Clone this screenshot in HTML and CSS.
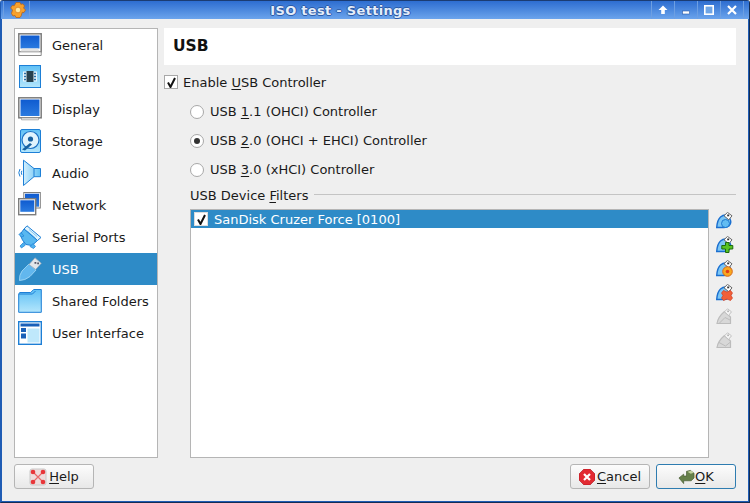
FILE: index.html
```html
<!DOCTYPE html>
<html lang="en">
<head>
<meta charset="utf-8">
<title>ISO test - Settings</title>
<link rel="stylesheet" href="styles.css">
</head>
<body>
<svg class="defs" width="0" height="0">
  <defs>
    <linearGradient id="sky" x1="0" y1="0" x2="0" y2="1"><stop offset="0" stop-color="#5fc0f5"/><stop offset="1" stop-color="#b4e6fc"/></linearGradient>
    <linearGradient id="skyr" x1="0" y1="0" x2="1" y2="0"><stop offset="0" stop-color="#d2effd"/><stop offset="1" stop-color="#62c0f3"/></linearGradient>
    <linearGradient id="scr" x1="0" y1="0" x2="0" y2="1"><stop offset="0" stop-color="#0f5bd0"/><stop offset="1" stop-color="#2a7ae0"/></linearGradient>
    <g id="mini">
      <path d="M.7 15.500 Q1.200 8 4.500 5 Q7 2.800 10 3 L14 7 Q16 11 13 14 Q11 15.500 8 15.500Z" fill="#7cc6f4" stroke="#1a6fd0" stroke-width="1.400"/>
      <path d="M8 3.800 L11.500 .4 L16 3.800 L12.800 7.800 Z" fill="#fff" stroke="#666" stroke-width="1"/>
      <rect x="11.200" y="2.500" width="2" height="1.800" fill="#333"/>
    </g>
    <g id="mini-off">
      <path d="M1 15.500 Q2 9 8.500 3.500 L14.500 9 L14.500 15.500 Z" fill="#d8d8d8" stroke="#bcbcbc" stroke-width="1.200"/>
      <path d="M8.500 3.800 L11.500 .8 L15.500 3.800 L12.500 7.500 Z" fill="#f5f5f5" stroke="#bcbcbc" stroke-width=".9"/>
      <rect x="11.200" y="2.500" width="1.800" height="1.600" fill="#b4b4b4"/>
    </g>
  </defs>
</svg>
<div class="window">
  <header class="titlebar">
    <div class="title-left">
      <svg class="app-icon" width="16" height="16" viewBox="0 0 16 16"><path d="M6 .5h4l.8 1.800 2-.4 1.700 2L13.600 6 15.500 8l-1.500 2.500-1.800-.2-1 3.500-1.200 1.700H6l-1-2-2 .5L1.500 11.500 2.500 8 .7 6l1.500-2.500 2 .3z" fill="#f7a12c" stroke="#b8651a" stroke-width=".8"/><circle cx="8" cy="8" r="2.800" fill="#ffe9a0" stroke="#d87a1c" stroke-width=".7"/></svg>
    </div>
    <div class="title">ISO test - Settings</div>
    <div class="title-buttons">
      <span class="tbtn"><svg width="10" height="10" viewBox="0 0 10 10"><path d="M5 .5 9.500 5H6.800v4H3.200V5H.5z" fill="#fff"/></svg></span>
      <span class="tbtn"><svg width="10" height="10" viewBox="0 0 10 10"><rect x="1.500" y="6" width="7" height="3" fill="#fff" stroke="#2a5aa8" stroke-width=".6"/></svg></span>
      <span class="tbtn"><svg width="10" height="10" viewBox="0 0 10 10"><rect x=".8" y=".8" width="8.400" height="8.400" fill="#6fa5e6" stroke="#fff" stroke-width="1.600"/></svg></span>
      <span class="tbtn"><svg width="10" height="10" viewBox="0 0 10 10"><path d="M1 1l8 8M9 1l-8 8" stroke="#fff" stroke-width="2.200"/></svg></span>
    </div>
  </header>
  <div class="client">
    <div class="main">
      <nav class="sidebar">
        <div class="nav-item">
          <svg class="nav-icon" viewBox="0 0 24 24"><rect x=".8" y=".8" width="22.400" height="18" fill="#fff" stroke="#7d7d7d" stroke-width="1.500"/><rect x="2.500" y="2.500" width="19" height="13" fill="url(#scr)"/><path d="M.8 18.800h22.400v3.700H.8z" fill="#fff" stroke="#8a8a8a"/><path d="M4 15.500h16l1.500 3H2.500z" fill="#e4e4e4"/></svg>
          <span>General</span>
        </div>
        <div class="nav-item">
          <svg class="nav-icon" viewBox="0 0 24 24"><rect x="1.500" y=".5" width="21" height="22" fill="url(#sky)" stroke="#1d7fd6"/><rect x="5" y="6.500" width="14" height="10" fill="#e8f6fd"/><rect x="8.500" y="6" width="7" height="11" fill="#26404f"/><path d="M6 8.500h2M6 11.500h2M6 14.500h2M16 8.500h2M16 11.500h2M16 14.500h2" stroke="#2a6ea8" stroke-width="1.300"/></svg>
          <span>System</span>
        </div>
        <div class="nav-item">
          <svg class="nav-icon" viewBox="0 0 24 24"><rect x=".8" y=".8" width="22.400" height="20" fill="#fff" stroke="#7d7d7d" stroke-width="1.500"/><rect x="2.500" y="2.500" width="19" height="16.500" fill="url(#scr)"/><path d="M3.500 21h17v1.800h-17z" fill="#fff" stroke="#999" stroke-width=".8"/></svg>
          <span>Display</span>
        </div>
        <div class="nav-item">
          <svg class="nav-icon" viewBox="0 0 24 24"><rect x="2.500" y=".5" width="20" height="23" rx="1.500" fill="url(#sky)" stroke="#1d7fd6"/><circle cx="12.500" cy="11" r="8.500" fill="#dff3fd" stroke="#1a70c4" stroke-width="1.200"/><circle cx="12.500" cy="10" r="2.600" fill="#17609f"/><path d="M4 20.500 12 14l2 1.500L7 21.500z" fill="#17609f"/></svg>
          <span>Storage</span>
        </div>
        <div class="nav-item">
          <svg class="nav-icon" viewBox="0 0 24 24"><path d="M5.500 -.8 16 7.500h6.500v8.200H16L5.500 24.500z" fill="url(#skyr)" stroke="#1d7fd6"/><path d="M16 7.500v8.200" stroke="#1d7fd6"/><path d="M2 8q-2.400 3.800 0 7.500M3.800 9.800q-1 2 0 4" fill="none" stroke="#1d7fd6"/></svg>
          <span>Audio</span>
        </div>
        <div class="nav-item">
          <svg class="nav-icon" viewBox="0 0 24 24"><rect x="5.800" y="-.5" width="16.500" height="15.500" fill="#fff" stroke="#7d7d7d"/><rect x="7" y=".7" width="14" height="13" fill="url(#scr)"/><rect x=".7" y="5.700" width="17" height="16" fill="#fff" stroke="#7d7d7d" stroke-width="1.400"/><rect x="2.300" y="7.300" width="14" height="11.500" fill="url(#scr)"/></svg>
          <span>Network</span>
        </div>
        <div class="nav-item">
          <svg class="nav-icon" viewBox="0 0 24 24"><path d="M9 .8 23 12.500 19.500 15.500 6 4z" fill="#dff3fd" stroke="#1d7fd6"/><path d="M11 4.500l8 7M9.500 6l8 7" stroke="#6cbcef" stroke-width=".8"/><path d="M6 4 19.500 15.500 14 20.500 8 19.500 4.500 15 2 9.500z" fill="#58b8f0" stroke="#1d7fd6"/><path d="M1 9.500 3 7.500 6 11 3.500 12zM12 21.500l3-3 2.500 3-2 2z" fill="#4db1ee" stroke="#1d7fd6" stroke-width=".7"/><path d="M5.500 17.500 2 21l1.500 2 4-3z" fill="#4db1ee" stroke="#1d7fd6" stroke-width=".7"/></svg>
          <span>Serial Ports</span>
        </div>
        <div class="nav-item active">
          <svg class="nav-icon" viewBox="0 0 24 24"><path d="M1.500 23.500Q1 18 4 14L11 7l7 6-6 6.500Q7 23.500 1.500 23.500z" fill="#62b7ee" stroke="#a8dcf8" stroke-width=".8"/><path d="M11 7.500 17 .8l6.300 5.500-5.600 6.200z" fill="#e2e6ea" stroke="#8fa4b4" stroke-width=".7"/><path d="M16.500 5h1.800v1.800h-1.800zM19.200 5.500h1.800v1.800h-1.800z" fill="#556"/></svg>
          <span>USB</span>
        </div>
        <div class="nav-item">
          <svg class="nav-icon" viewBox="0 0 24 24"><path d="M.7 5l1-1.500h11l3-3h7.600v22.800H.7z" fill="url(#sky)" stroke="#1d7fd6"/><path d="M1 5H14.500l3-3" fill="none" stroke="#1d7fd6"/></svg>
          <span>Shared Folders</span>
        </div>
        <div class="nav-item">
          <svg class="nav-icon" viewBox="0 0 24 24"><rect x=".7" y=".7" width="22.600" height="22.600" fill="#fff" stroke="#1d7fd6" stroke-width="1.400"/><rect x="2.500" y="2.500" width="19" height="3" fill="#1960b8"/><rect x="3" y="7" width="5" height="4" fill="#1960b8"/><rect x="3" y="12.500" width="5" height="5" fill="#1960b8"/><rect x="9.500" y="7.500" width="12" height="14" fill="#bfe8fb"/></svg>
          <span>User Interface</span>
        </div>
      </nav>
      <section class="panel">
        <h1 class="panel-title">USB</h1>
        <div class="enable-row">
          <span class="check"><svg width="11" height="11" viewBox="0 0 11 11"><path d="M2 5.500 4.500 10 9 1" fill="none" stroke="#111" stroke-width="2"/></svg></span>
          <span>Enable <u>U</u>SB Controller</span>
        </div>
        <div class="radios">
          <div class="radio-row"><span class="radio"></span><span>USB <u>1</u>.1 (OHCI) Controller</span></div>
          <div class="radio-row"><span class="radio on"></span><span>USB <u>2</u>.0 (OHCI + EHCI) Controller</span></div>
          <div class="radio-row"><span class="radio"></span><span>USB <u>3</u>.0 (xHCI) Controller</span></div>
        </div>
        <div class="filters">
          <div class="group-head"><span>USB Device <u>F</u>ilters</span><i class="rule"></i></div>
          <div class="filter-body">
            <div class="list">
              <div class="list-row">
                <span class="check list-check"><svg width="11" height="11" viewBox="0 0 11 11"><path d="M2 5.500 4.500 10 9 1" fill="none" stroke="#111" stroke-width="2"/></svg></span>
                <span>SanDisk Cruzer Force [0100]</span>
              </div>
            </div>
            <div class="tools">
              <svg class="tool" viewBox="0 0 18 18"><use href="#mini"/><circle cx="9.500" cy="11.500" r="4" fill="#62bcf2" stroke="#1e78d0"/></svg>
              <svg class="tool" viewBox="0 0 18 18"><use href="#mini"/><path d="M9.500 6.500h3.500v3h3.800v3.500H13v3.500H9.500V13H5.800V9.500h3.700z" fill="#58c322" stroke="#1d6a0c"/></svg>
              <svg class="tool" viewBox="0 0 18 18"><use href="#mini"/><circle cx="11.500" cy="11.500" r="4.800" fill="#f8a91f" stroke="#d8661a"/><circle cx="11.500" cy="11.500" r="1.800" fill="#e03c1c"/></svg>
              <svg class="tool" viewBox="0 0 18 18"><use href="#mini"/><path d="M7.500 6.500 11 8 14.500 6.500l2 2.500-1.500 2.500 1.500 2.500-2 2.500L11 15 7.500 16.500l-2-2.500L7 11.500 5.500 9z" fill="#f0603a" stroke="#d23c20" stroke-width=".7"/></svg>
              <svg class="tool" viewBox="0 0 18 18"><use href="#mini-off"/><path d="M3 15.500 9 9.500 14 12" fill="none" stroke="#bcbcbc"/></svg>
              <svg class="tool" viewBox="0 0 18 18"><use href="#mini-off"/><path d="M3 10.500 9.500 14 14.500 10" fill="none" stroke="#bcbcbc"/></svg>
            </div>
          </div>
        </div>
      </section>
    </div>
    <footer class="buttons">
      <button class="btn help" type="button">
        <svg width="18" height="18" viewBox="0 0 18 18"><rect x="1" y="1" width="16" height="16" rx="2" fill="#eedcdc" stroke="#c8c8c8"/><path d="M4 4l10 10M14 4 4 14" stroke="#e8686a" stroke-width="1.200"/><circle cx="4" cy="4" r="2.300" fill="#e8363a"/><circle cx="14" cy="4" r="2.300" fill="#e8363a"/><circle cx="4" cy="14" r="2.300" fill="#e8363a"/><circle cx="14" cy="14" r="2.300" fill="#e8363a"/></svg>
        <span><u>H</u>elp</span>
      </button>
      <div class="btn-group">
        <button class="btn" type="button">
          <svg width="16" height="16" viewBox="0 0 16 16"><path d="M5 0h6l5 5v6l-5 5H5l-5-5V5z" fill="#e22a32" stroke="#a8101a" stroke-width=".6"/><path d="M5 5l6 6M11 5l-6 6" stroke="#fff" stroke-width="2.200"/></svg>
          <span><u>C</u>ancel</span>
        </button>
        <button class="btn default" type="button">
          <svg width="17" height="16" viewBox="0 0 18 16"><path d="M1 9 6 5v2h3V2l4-1 4 3v5l-3 3H6v3z" fill="#66804a" stroke="#465a30" stroke-width=".7"/><path d="M10 2.500l4-1 2.500 2-3 1z" fill="#c4d4a0"/></svg>
          <span><u>O</u>K</span>
        </button>
      </div>
    </footer>
  </div>
</div>
</body>
</html>
```
FILE: styles.css
```css
* { box-sizing: border-box; }
html, body { margin: 0; padding: 0; }
body {
  width: 750px;
  height: 503px;
  overflow: hidden;
  font-family: "DejaVu Sans", sans-serif;
  font-size: 13px;
  color: #1a1a1a;
  background: #efefef;
}
.defs { display: block; height: 0; }
u { text-underline-offset: 2px; }
.window {
  width: 750px;
  height: 503px;
  display: flex;
  flex-direction: column;
  border: 1px solid #132d54;
  border-top-color: #1b3c72;
  border-left-color: #1f5cb4;
  border-radius: 3px 3px 0 0;
  background: #efefef;
}
.titlebar {
  flex: 0 0 18px;
  display: flex;
  align-items: center;
  background: linear-gradient(#2d6dd0, #6ba4ec);
  color: #fff;
}
.title-left {
  width: 27px;
  height: 100%;
  margin-left: 2px;
  padding-left: 6px;
  display: flex;
  align-items: center;
  border-left: 1px solid #6d9fe2;
  border-right: 1px solid #6d9fe2;
}
.title {
  flex: 1;
  text-align: center;
  font-size: 13px;
  font-weight: 700;
  letter-spacing: .3px;
  color: #e4edf9;
  text-shadow: 1px 0 0 #2a5aa8, 0 1px 0 #2a5aa8, -1px 0 0 #2a5aa8, 0 -1px 0 #2a5aa8;
}
.title-buttons { display: flex; height: 100%; padding-right: 5px; }
.tbtn {
  width: 23px;
  display: flex;
  align-items: center;
  justify-content: center;
  border-left: 1px solid #6d9fe2;
}
.tbtn:last-child { width: 24px; border-right: 1px solid #6d9fe2; }
.client {
  flex: 1;
  min-height: 0;
  display: flex;
  flex-direction: column;
  padding: 9px 12px 12px 12px;
  border-left: 1px solid #1f5cb4;
  border-right: 1px solid #1f5cb4;
  border-bottom: 1px solid #1f5cb4;
}
.main { flex: 1; min-height: 0; display: flex; gap: 6px; }
.sidebar {
  width: 144px;
  background: #fff;
  border: 1px solid #b5b5b5;
}
.nav-item {
  height: 32px;
  display: flex;
  align-items: center;
  gap: 10px;
  padding-left: 3px;
  white-space: nowrap;
}
.nav-item.active { background: #2e8bc7; color: #fff; }
.nav-icon { width: 24px; height: 24px; flex: none; overflow: visible; }
.panel { flex: 1; min-width: 0; display: flex; flex-direction: column; }
.panel-title {
  margin: 0;
  height: 37px;
  padding-left: 9px;
  background: #fff;
  font-size: 15.500px;
  line-height: 37px;
  font-weight: 700;
  color: #111;
}
.enable-row {
  display: flex;
  align-items: center;
  gap: 5px;
  height: 16px;
  margin-top: 9px;
}
.check {
  width: 14px;
  height: 14px;
  flex: none;
  background: #fff;
  border: 1px solid #a8a8a8;
  display: flex;
  align-items: center;
  justify-content: center;
}
.radios {
  margin-top: 7px;
  padding-left: 26px;
  display: flex;
  flex-direction: column;
}
.radio-row {
  height: 29px;
  display: flex;
  align-items: center;
  gap: 6px;
}
.radio {
  width: 14px;
  height: 14px;
  flex: none;
  border-radius: 50%;
  background: #fff;
  border: 1px solid #a8a8a8;
  display: flex;
  align-items: center;
  justify-content: center;
}
.radio.on::after {
  content: "";
  width: 6px;
  height: 6px;
  border-radius: 50%;
  background: #333;
}
.filters {
  flex: 1;
  min-height: 0;
  margin-top: 3px;
  padding-left: 26px;
  display: flex;
  flex-direction: column;
}
.group-head {
  height: 16px;
  display: flex;
  align-items: center;
  gap: 6px;
}
.rule { flex: 1; height: 1px; background: #c4c4c4; margin-top: -2px; }
.filter-body { flex: 1; min-height: 0; display: flex; margin-top: 6px; }
.list {
  width: 519px;
  background: #fff;
  border: 1px solid #b5b5b5;
}
.list-row {
  height: 18px;
  display: flex;
  align-items: center;
  gap: 6px;
  padding-left: 3px;
  background: #2e8bc7;
  color: #fff;
}
.list-check { border-color: #ddd; }
.tools {
  flex: 1;
  display: flex;
  flex-direction: column;
  align-items: flex-start;
  gap: 6px;
  padding: 3px 0 0 7px;
}
.tool { width: 18px; height: 18px; display: block; }
.buttons {
  flex: 0 0 31px;
  display: flex;
  justify-content: space-between;
  align-items: flex-end;
}
.btn-group { display: flex; gap: 6px; }
.btn {
  width: 80px;
  height: 25px;
  display: flex;
  align-items: center;
  justify-content: center;
  gap: 2px;
  padding: 0;
  font-family: inherit;
  font-size: 13px;
  color: #1a1a1a;
  border: 1px solid #b5b5b5;
  border-radius: 3px;
  background: linear-gradient(#fcfcfc, #e8e8e8);
}
.btn.default { border-color: #2e7cb0; gap: 0; }
```
